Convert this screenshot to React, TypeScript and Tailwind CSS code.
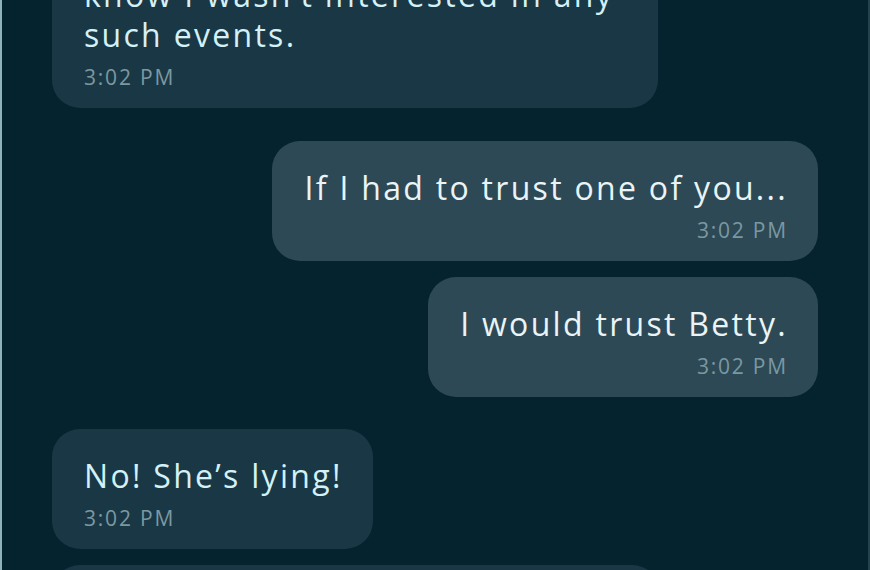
import React from "react";

type Msg = { text: React.ReactNode; sent: boolean; width?: string };

function Bubble({ text, sent, width }: Msg) {
  return (
    <div className={sent ? "flex justify-end" : "flex justify-start"}>
      <div
        className={
          (sent
            ? "bg-[#2d4955] text-[#eaf4f6] items-end text-right "
            : "bg-[#1a3745] text-[#d3f1f6] items-start text-left ") +
          "flex flex-col rounded-[28px] pl-[32px] pr-[30px] pt-[27px] pb-[19px] " +
          (width ?? "")
        }
      >
        <div className="text-[32px] leading-[40px] tracking-[2.3px] whitespace-nowrap">{text}</div>
        <div className="mt-[10px] text-[21px] leading-[24px] tracking-[1.8px] text-[#7b98a1]">3:02 PM</div>
      </div>
    </div>
  );
}

export default function App() {
  return (
    <div
      className="w-[870px] h-[570px] overflow-hidden bg-[#05222f] border-l-2 border-l-[#8fb3bb] border-r-2 border-r-[#24424d]"
      style={{ fontFamily: "'Open Sans', sans-serif" }}
    >
      <div className="flex flex-col mt-[-52px] pl-[50px] pr-[50px]">
        <Bubble
          sent={false}
          width="w-[606px]"
          text={
            <>
              know I wasn’t interested in any
              <br />
              such events.
            </>
          }
        />
        <div className="h-[33px]" />
        <Bubble sent={true} text="If I had to trust one of you..." />
        <div className="h-[16px]" />
        <Bubble sent={true} text="I would trust Betty." />
        <div className="h-[32px]" />
        <Bubble sent={false} text="No! She’s lying!" />
        <div className="h-[16px]" />
        <div className="flex justify-start">
          <div className="w-[608px] h-[120px] rounded-[28px] bg-[#1a3745]" />
        </div>
      </div>
    </div>
  );
}
